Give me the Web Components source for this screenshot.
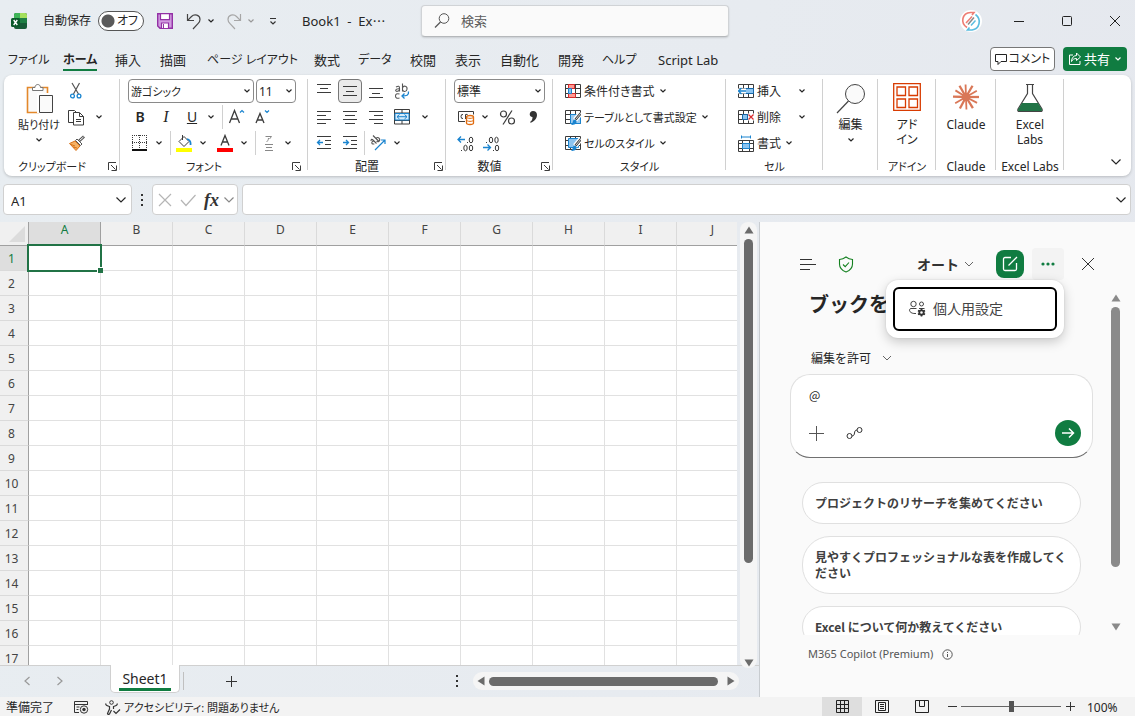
<!DOCTYPE html>
<html lang="ja">
<head>
<meta charset="utf-8">
<title>Book1 - Excel</title>
<style>
html,body{margin:0;height:100%}
body{font-family:"Noto Sans","Noto Sans CJK JP",sans-serif;font-size:12px;line-height:16px;color:#262626;overflow:hidden}
</style>
</head>
<body>
<excel-app></excel-app>
<script>
const BASE = `
*{box-sizing:border-box}
:host{display:block}
:host,button,input,select,textarea{font-feature-settings:"palt"}
button,select,input,textarea{font:inherit;font-feature-settings:"palt";color:inherit;margin:0;padding:0;border:0;background:none;outline:0}
button{display:inline-flex;align-items:center;justify-content:center;white-space:nowrap}
a{color:inherit;text-decoration:none}
`;
const define = (name, css, html, init) => customElements.define(name, class extends HTMLElement {
  constructor() {
    super();
    this.attachShadow({mode: 'open'}).innerHTML = `<style>${BASE}${css}</style>${html}`;
  }
  connectedCallback() { if (init) init(this, this.shadowRoot); }
});

const K = '#3b3b3b', B = '#1a84cf', G = '#107c41';
const lines = (list, c = K) => list.map(([x1, y, x2]) => `<path d="M${x1} ${y}.5H${x2}" stroke="${c}"/>`).join('');
const table = `<path d="M.5 1.5h15v13H.5zM.5 5.5h15M.5 10.5h15M5.5 1.5v13M10.5 1.5v13" fill="#fff" stroke="${K}"/>`;
const brushOver = `<path d="M16 4l-6 7" stroke="#fff" stroke-width="5"/><path d="M16 4l-5.500 6.500" stroke="${K}" stroke-width="2.500"/><path d="M16 4l-5 6" stroke="#fff" stroke-width=".8"/><path d="M6 16c3 0 6-1 5.500-4-.5-1.800-3-1.800-3.500 0-.4 1.800-.8 3-2 4z" fill="${B}"/>`;
const ICONS = {
  excel: [16,16,`<rect x="3" y="0" width="13" height="16" rx="2" fill="#185c37"/><path d="M3 5V2a2 2 0 012-2h5v6H3z" fill="#3fb558"/><path d="M9 0h5a2 2 0 012 2v4H9z" fill="#a5e05c"/><path d="M3 5h13v5H3z" fill="#1f8044"/><rect x="0" y="5" width="9" height="9" rx="1.500" fill="#0b5a2b"/><path d="M2.700 7l3.600 5M6.300 7l-3.600 5" stroke="#fff" stroke-width="1.400"/>`],
  save: [16,16,`<path d="M.7.700h14.600v14.600H3L.7 13z" fill="#d19be0" stroke="#9331a5" stroke-width="1.400"/><path d="M3.500.700h9v6h-9zM4.500 15v-5h7v5" fill="#fff" stroke="#9331a5" stroke-width="1.200"/><path d="M6.500 11v4" stroke="#9331a5"/>`],
  undo: [16,17,`<path d="M1.500 1v6.500H8M1.700 7.300L5.500 3.500c3-3 8.500-1.500 8.500 3 0 2-1 3.200-2 4.200L7 16" stroke="#444" stroke-width="1.200"/>`],
  redo: [16,17,`<path d="M14.500 1v6.500H8M14.300 7.300L10.500 3.500c-3-3-8.500-1.500-8.500 3 0 2 1 3.200 2 4.200L9 16" stroke="#a6a6a6" stroke-width="1.200"/>`],
  chev: [8,6,`<path d="M1.500 1.500L4 4l2.500-2.500" stroke="currentColor" stroke-width="1.200"/>`],
  chevT: [10,6,`<path d="M1 1l4 4 4-4" stroke="#555" stroke-width=".9"/>`],
  chevL: [12,8,`<path d="M1.500 1.500L6 6l4.500-4.500" stroke="currentColor" stroke-width="1.200"/>`],
  qat: [8,8,`<path d="M1 1.500h6M1.500 4.500L4 7l2.500-2.500" stroke="#333" stroke-width="1.200"/>`],
  search: [18,18,`<circle cx="11" cy="6.500" r="4.800" stroke="#555"/><path d="M7.500 10L2 15.500" stroke="#555" stroke-width="1.200"/>`],
  avatar: [22,22,`<circle cx="11" cy="11" r="11" fill="#fff"/><path d="M7 17.500C0 13 2 3 10.500 2.500h3.500L12 5" stroke="#ee7d74" stroke-width="1.600"/><path d="M15.500 4.500c6.500 5 4 14.500-3.500 15.500H7.500l2-2.500" stroke="#59bde0" stroke-width="1.600"/><path d="M6 13l6-6.500" stroke="#ee7d74" stroke-width="1.500"/><path d="M8 14.500l6-7" stroke="#888" stroke-width="1.500"/><path d="M11 15.500l4.500-5" stroke="#59bde0" stroke-width="1.500"/>`],
  min: [12,12,`<path d="M1 6.500h10" stroke="#222"/>`],
  max: [12,12,`<rect x="1.500" y="1.500" width="9" height="9" rx="1" stroke="#222"/>`],
  close: [12,12,`<path d="M1 1l10 10M11 1L1 11" stroke="#222"/>`],
  comment: [12,12,`<path d="M.5 1.500h11v7H6L3 11.500v-3H.5z" stroke="#222"/>`],
  share: [14,14,`<path d="M5 3H1.500v9.500H12V9M8.500 1l4 4-4 3.500V6.500C6 6.500 4.500 7.500 3.500 9.500c0-3.500 2-5.800 5-6z" stroke="#fff"/>`],
  paste: [30,32,`<path d="M3.500 4.500h20V11H14v18.500H3.500z" fill="#fafafa" stroke="#e3882b" stroke-width="1.600"/><path d="M8.500 7.500V4.500h2.500c0-4 5.500-4 5.500 0H19v3z" fill="#fff" stroke="#777"/><path d="M13 10h17v20H13z" fill="#fff"/><path d="M15.500 12.500h13v17h-13z" fill="#fafafa" stroke="#444"/>`],
  cut: [16,18,`<path d="M4 1l6.500 11M11.500 1L5.500 12" stroke="#555" stroke-width="1.200"/><circle cx="4.500" cy="14" r="1.900" stroke="${B}" stroke-width="1.300"/><circle cx="11" cy="14" r="1.900" stroke="${B}" stroke-width="1.300"/>`],
  copy: [18,17,`<path d="M6 13.500H1.500V1.500h6l2 2" stroke="${K}"/><path d="M6.500 3.500h6l4 4v8.500h-10z" fill="#fff" stroke="${K}"/><path d="M12.500 4v3.500h4M9 10.500h5M9 12.500h5" stroke="${K}"/>`],
  brush: [17,17,`<path d="M16 1.500l-5.500 5" stroke="#555" stroke-width="3"/><path d="M15.500 2l-4 3.500" stroke="#fff"/><path d="M1.500 8.500L8 15.500l4-4.500-5-5z" fill="#f5b266" stroke="#d9731a"/><path d="M7.500 5.500l5 5 1.500-1.500-5-5z" fill="#fff" stroke="#555"/><path d="M3 9.500l4 1.500M5 12l4 1" stroke="#d9731a"/>`],
  launch: [9,9,`<path d="M.5 8V.5H8M3 3l4.500 4.500M8.500 3.500v5h-5" stroke="${K}"/>`],
  bigA: [18,18,`<path d="M1.500 15L6.500 2.500 11.500 15M3.300 11h6.500" stroke="${K}" stroke-width="1.300"/><path d="M12 4.500L14 2.500l2 2" stroke="${B}" stroke-width="1.200"/>`],
  smallA: [18,18,`<path d="M2 15L6 5.500 10 15M3.500 12h5" stroke="${K}" stroke-width="1.300"/><path d="M11 2.500l2 2 2-2" stroke="${B}" stroke-width="1.200"/>`],
  borders: [16,16,`<path d="M0 .5h15M0 7.500h15M.5 0v14M7.500 0v14M14.500 0v14" stroke="${K}" stroke-dasharray="1 1"/><path d="M0 15h15" stroke="#111" stroke-width="2"/>`],
  fill: [16,18,`<path d="M3 7.500L8 2.500l5 5-5 5z" fill="#fff" stroke="${K}"/><path d="M6.500 1v5" stroke="${K}"/><path d="M11 5c2 .5 4 2 3.500 6" stroke="${B}" stroke-width="1.800"/><path d="M0 14h16v4H0z" fill="#ff0"/>`],
  fontcolor: [16,18,`<path d="M4 11.500L8 1.500l4 10M5.500 8h5" stroke="${K}" stroke-width="1.300"/><path d="M0 14h16v4H0z" fill="red"/>`],
  ruby: [10,17,`<path d="M1.500 1.500h6L5.500 4M4.500 3c0 2-1 3-2 4" stroke="#888"/><path d="M1 9.500h8M2 12.500h6M1 15.500h8" stroke="#888"/>`],
  top: [16,16,lines([[1,1,15],[4,5,12],[1,9,15]])],
  mid: [16,16,lines([[1,3,15],[4,8,12],[1,12,15]])],
  bot: [16,16,lines([[1,5,15],[4,10,12],[1,14,15]])],
  left: [16,16,lines([[1,2,15],[1,6,10],[1,10,15],[1,14,10]])],
  center: [16,16,lines([[1,2,15],[3,6,13],[1,10,15],[3,14,13]])],
  right: [16,16,lines([[1,2,15],[6,6,15],[1,10,15],[6,14,15]])],
  outdent: [16,16,lines([[1,1,15],[9,5,15],[9,9,15],[1,13,15]])+`<path d="M1.500 7.500H7M4 5L1.500 7.500 4 10" stroke="${B}" stroke-width="1.300"/>`],
  indent: [16,16,lines([[1,1,15],[9,5,15],[9,9,15],[1,13,15]])+`<path d="M1 7.500h5.500M4 5l2.500 2.500L4 10" stroke="${B}" stroke-width="1.300"/>`],
  wrap: [16,17,`<path d="M2 4q3.500-2 3.500 1v3.500M5.500 5.800c-5-.3-4.500 3 -2 2.500 1.500-.3 2-1 2-2M8.500.5v8M8.500 5c1-3 5-2 4.500 1.200-.4 3-4 3-4.500.5M5.500 11q-4-1-4 2t4 2" stroke="#555" stroke-width="1.100"/><path d="M14.500 8.500c.5 4-2 4.500-6.500 4.500M10.500 10.500L8 13l2.500 2.500" stroke="${B}" stroke-width="1.300"/>`],
  merge: [16,16,`<path d="M.5 .5h15v14.500H.5zM.5 4h15M.5 11.500h15M8 .5V4M8 11.500V15" stroke="${K}"/><path d="M1 4.500h14v6.500H1z" fill="#d6ebfa" stroke="${B}"/><path d="M3 7.700h10M5.500 5.500L3 7.700 5.500 10M10.500 5.500L13 7.700 10.500 10" stroke="${B}"/>`],
  orient: [18,18,`<path d="M2 7q0-3 2.500-.5L7.500 9.500M4.500 7c-3 1-1.500 4 .8 2.700M4 1.500l6 6M7 4.500c2-2.500 5 .5 3 2.800-1 .8-2 .4-2.500-.3" stroke="#555" stroke-width="1.100"/><path d="M6 16L16 6M12 6h4v4" stroke="${B}" stroke-width="1.200"/>`],
  currency: [18,17,`<path d="M8 12.500H1.500v-10h15v3" stroke="${K}"/><path d="M6 5.500q-2-.5-2 2t2 2M8.500 10V5.500q2-.8 2.500 1" stroke="${K}"/><path d="M9.500 8c0-2 7-2 7 0v6c0 2-7 2-7 0z" fill="#fff" stroke="#e06c10" stroke-width="1.300"/><path d="M9.500 8c0 1.800 7 1.800 7 0M9.500 11c0 1.800 7 1.800 7 0" stroke="#e06c10"/>`],
  percent: [17,17,`<circle cx="4.500" cy="5" r="3" stroke="${K}" stroke-width="1.200"/><circle cx="12.500" cy="12" r="3" stroke="${K}" stroke-width="1.200"/><path d="M13 1.500L4 15.500" stroke="${K}" stroke-width="1.200"/>`],
  comma: [10,16,`<path d="M5 2C1 2 .5 8 4.500 8c0 3-1 4-2.500 5l.7.700C6 12.500 9 9.500 9 6c0-2.500-1.500-4-4-4z" fill="#333"/>`],
  decinc: [18,17,`<path d="M1 4.500h7M4 1.500l-3 3 3 3" stroke="${B}" stroke-width="1.300"/><path d="M10.500 7v1M4.500 15v1" stroke="${K}"/><ellipse cx="14" cy="5" rx="1.800" ry="2.800" stroke="${K}"/><ellipse cx="8.500" cy="13" rx="1.700" ry="2.800" stroke="${K}"/><ellipse cx="14" cy="13" rx="1.700" ry="2.800" stroke="${K}"/>`],
  decdec: [18,17,`<path d="M0 12.500h7M4.500 9.500l3 3-3 3" stroke="${B}" stroke-width="1.300"/><path d="M3.500 7v1M10.500 15v1" stroke="${K}"/><ellipse cx="8" cy="5" rx="1.700" ry="2.800" stroke="${K}"/><ellipse cx="13.500" cy="5" rx="1.700" ry="2.800" stroke="${K}"/><ellipse cx="14" cy="13" rx="1.700" ry="2.800" stroke="${K}"/>`],
  cond: [16,16,table+`<path d="M3.500 1.500h6v4h-6zM3.500 10.500h7v4h-7z" fill="#ff9a94" stroke="#d92b2b"/><path d="M3.500 5.500h3v5h-3z" fill="#8cc4f0" stroke="${B}"/>`],
  tstyle: [16,16,table+`<path d="M5.500 5.500h10v9h-10z" fill="#9ccbf0" stroke="${B}"/>`+brushOver],
  cstyle: [16,16,table+`<path d="M3.500 3.500h10v9h-10z" fill="#8cc4f0" stroke="${B}"/>`+brushOver],
  cinsert: [16,16,table+`<path d="M6.500 5.500h9v5h-9z" fill="#8cc4f0" stroke="#1667a8"/><path d="M0 8h8" stroke="#fff" stroke-width="5"/><path d="M.5 8H8M3.500 5L.5 8l3 3" stroke="${B}" stroke-width="1.300"/>`],
  cdelete: [16,16,table+`<path d="M4.500 5.500h5v5h-5z" fill="#8cc4f0" stroke="#1667a8"/><path d="M10 4.500h6v7h-6z" fill="#fff"/><path d="M10.500 5.500l5 5M15.500 5.500l-5 5" stroke="#d92b2b" stroke-width="1.200"/>`],
  cformat: [16,17,`<path d="M3.500 2h9M3.500 .5v3M12.500.5v3" stroke="${B}"/><path d="M.5 5.500h15v11H.5zM.5 8.500h15M.5 13.500h15M4.500 5.500v11M11.500 5.500v11" stroke="${K}"/><path d="M4.500 8.500h7v5h-7z" fill="#8cc4f0" stroke="${B}"/>`],
  find: [30,32,`<circle cx="19" cy="11" r="9.500" fill="#fafafa" stroke="#444"/><path d="M12.500 18L1 30" stroke="#444" stroke-width="1.200"/>`],
  addin: [28,28,`<path d="M.7.700h26.600v26.600H.7zM4 4h8.500v8.500H4zM16 4h8.500v8.500H16zM4 16h8.500v8.500H4zM16 16h8.500v8.500H16z" stroke="#d83b01" stroke-width="1.300"/>`],
  claude: [28,28,[0,28,58,88,118,150,182,212,240,268,300,330].map((a,i)=>`<path d="M14 14L${14+(i%2?12.5:13)} 14" stroke="#d97757" stroke-width="${i%2?1.8:2.3}" transform="rotate(${a} 14 14)"/>`).join('')+`<circle cx="14" cy="14" r="4" fill="#d97757"/>`],
  labs: [28,30,`<path d="M10 1.500h8M11.500 1.500v9L2 26c-.7 1.700 0 2.500 1.500 2.500h21c1.500 0 2.200-.8 1.500-2.500l-9.500-15.500v-9" fill="#fff" stroke="#444" stroke-width="1.200"/><path d="M6 20h16l4 6.500c.3 1-.3 1.500-1.500 1.500h-21C2.300 28 1.700 27.500 2 26.500z" fill="#217346"/>`],
  x: [14,14,`<path d="M1 1l12 12M13 1L1 13" stroke="#b5b5b5" stroke-width="1.200"/>`],
  check: [16,14,`<path d="M1 7l5 5.500L15.500 2" stroke="#b5b5b5" stroke-width="1.200"/>`],
  dots: [4,12,`<path d="M1 0h2v2H1zM1 5h2v2H1zM1 10h2v2H1z" fill="#333"/>`],
  lt: [8,10,`<path d="M6.500 1L2 5l4.500 4" stroke="#999" stroke-width="1.200"/>`],
  gt: [8,10,`<path d="M1.500 1L6 5 1.500 9" stroke="#999" stroke-width="1.200"/>`],
  plus: [11,11,`<path d="M5.500 0v11M0 5.500h11" stroke="#333"/>`],
  zin: [9,9,`<path d="M4.500 0v9M0 4.500h9" stroke="#333"/>`],
  zout: [9,9,`<path d="M0 4.500h9" stroke="#333"/>`],
  plusL: [15,15,`<path d="M7.500 0v15M0 7.500h15" stroke="#555"/>`],
  up: [10,8,`<path d="M5 .5L9.500 7.500H.5z" fill="currentColor"/>`],
  down: [10,8,`<path d="M5 7.500L9.500.500H.5z" fill="currentColor"/>`],
  tleft: [8,10,`<path d="M.5 5L7.500.500v9z" fill="currentColor"/>`],
  tright: [8,10,`<path d="M7.500 5L.5.500v9z" fill="currentColor"/>`],
  menu: [16,11,`<path d="M0 .5h12M0 5.500h16M0 10.500h10" stroke="#333"/>`],
  shield: [16,17,`<path d="M8 1c2 1.500 4 2.300 6.500 2.500V8c0 4-2.500 6.500-6.500 8-4-1.500-6.500-4-6.500-8V3.500C4 3.300 6 2.500 8 1zM5 8.500l2.200 2.200L11 6.500" stroke="#13801f" stroke-width="1.100"/>`],
  compose: [16,16,`<path d="M9 1.500H3A1.500 1.500 0 001.500 3v10A1.500 1.500 0 003 14.500h10a1.500 1.500 0 001.500-1.500V7M6.500 9.500L15 1" stroke="#fff" stroke-width="1.300"/>`],
  more: [14,4,`<circle cx="2" cy="2" r="1.600" fill="${G}"/><circle cx="7" cy="2" r="1.600" fill="${G}"/><circle cx="12" cy="2" r="1.600" fill="${G}"/>`],
  closeL: [14,14,`<path d="M1 1l12 12M13 1L1 13" stroke="#333"/>`],
  people: [18,17,`<circle cx="5.500" cy="4" r="2.700" stroke="#444"/><circle cx="13.500" cy="4" r="2" stroke="#444"/><path d="M8.500 8.500H3C.5 8.500.5 14 8 13.500M11 8.500h5.500" stroke="#444"/><circle cx="13.500" cy="12.500" r="2.200" stroke="#333" stroke-width="1.800"/><path d="M13.500 8.500v2M13.500 14.500v2M10 10.500l1.800 1M15.200 13.500l1.800 1M17 10.500l-1.800 1M11.800 13.500l-1.800 1" stroke="#333" stroke-width="1.600"/>`],
  flow: [17,14,`<circle cx="3.500" cy="10" r="2.500" stroke="#333"/><circle cx="13.500" cy="4" r="2.500" stroke="#333"/><path d="M6 10c4 0 1-6 5-6" stroke="#333"/>`],
  send: [14,12,`<path d="M1 6h11.500M8 1.500L12.500 6 8 10.500" stroke="#fff" stroke-width="1.500"/>`],
  info: [11,11,`<circle cx="5.500" cy="5.500" r="4.700" stroke="#555"/><path d="M5.500 5v3M5.500 3v1" stroke="#555"/>`],
  macro: [16,14,`<path d="M6 12.500H1.500v-11h13V5M1.500 4.500h13M3.500 7h3M3.500 9.500h2" stroke="#333"/><circle cx="11" cy="9.500" r="3.700" fill="#f3f3f3" stroke="#333"/><circle cx="11" cy="9.500" r="1.700" fill="#333"/>`],
  a11y: [16,15,`<circle cx="6.500" cy="2.500" r="1.800" stroke="#333"/><path d="M1 3.500C0 5.500 3 6 4.500 6.500V9L2.500 13.500c.5 1.500 2 1 2.500-.5l1.500-3M12 3.500c1 2-2 2.500-3.500 3V9M8.500 11l2.500 2.500L15 9.500" stroke="#333" stroke-width="1.200"/>`],
  vnormal: [13,13,`<path d="M.5.500h12v12H.5zM.5 4.500h12M.5 8.500h12M4.500 .5v12M8.500.5v12" stroke="#222"/>`],
  vlayout: [14,13,`<path d="M.5.500h13v12H.5zM3.500 2.500h7v8h-7zM5 4.500h4M5 6.500h4M5 8.500h4" stroke="#222"/>`],
  vbreak: [14,13,`<path d="M.5.500h13v12H.5zM4.500.5v6h5M9.500.5v6" stroke="#222"/>`]
};
customElements.define('ui-icon', class extends HTMLElement {
  constructor() { super(); this.attachShadow({mode: 'open'}); }
  connectedCallback() {
    const [w, h, body] = ICONS[this.getAttribute('name')];
    this.shadowRoot.innerHTML = `<style>:host{display:inline-flex;flex:none}svg{display:block}</style><svg width="${w}" height="${h}" viewBox="0 0 ${w} ${h}" fill="none" aria-hidden="true">${body}</svg>`;
  }
});
const ic = n => `<ui-icon name="${n}"></ui-icon>`;

define('title-bar', `
:host{display:flex;align-items:center;height:42px}
.left{flex:0 0 421px;display:flex;align-items:center;padding-left:11px}
label.auto{display:flex;align-items:center;gap:7px;margin-left:16px}
.switch{appearance:none;display:block;grid-area:1/1;width:46px;height:20px;border:1px solid #555;border-radius:10px;background:radial-gradient(circle at 9px 9px,#5a5a5a 6px,transparent 7px),#fff}
.sw{display:grid;align-items:center}.sw span{grid-area:1/1;justify-self:end;padding-right:6px}
.gap{margin-left:5px}.save{margin-left:13px}.undo{margin-left:13px}.redo{margin-left:11px}.qat{margin-left:14px}
.doc{margin-left:25px;white-space:pre;font-size:13px}
.doc i{font-family:"Noto Sans CJK JP",sans-serif;font-style:normal}
.search{flex:0 1 308px;min-width:100px;height:32px;display:flex;align-items:center;gap:10px;padding-left:11px;background:#fafafa;border:1px solid #d0d3d6;border-bottom-color:#b5b8bb;border-radius:4px;box-shadow:0 1px 2px #0002}
.search input{flex:1;min-width:0;font-size:13px}.search input::placeholder{color:#5c5c5c;opacity:1}
.win{margin-left:auto;display:flex;align-items:center;gap:8px}
.win button{width:40px;height:32px}.win .me{margin-right:8px;width:24px}
`, `
<div class="left">${ic('excel')}<label class="auto">自動保存<span class="sw"><input class="switch" type="checkbox"><span>オフ</span></span></label>
<button class="save" aria-label="上書き保存">${ic('save')}</button>
<button class="undo" aria-label="元に戻す">${ic('undo')}</button><button class="gap">${ic('chev')}</button>
<button class="redo" aria-label="やり直し">${ic('redo')}</button><button class="gap" style="color:#999">${ic('chev')}</button>
<button class="qat">${ic('qat')}</button><span class="doc">Book1  -  Ex<i>…</i></span></div>
<label class="search">${ic('search')}<input type="text" placeholder="検索" aria-label="検索"></label>
<div class="win"><button class="me" aria-label="アカウント">${ic('avatar')}</button><button aria-label="最小化">${ic('min')}</button><button aria-label="最大化">${ic('max')}</button><button aria-label="閉じる">${ic('close')}</button></div>`);

define('ribbon-tabs', `
:host{display:flex;height:33px;align-items:center}
nav{flex:1;display:grid;grid-template-columns:55px 52px 45px 47px 107px 44px 52px 45px 45px 58px 44px 56px auto;justify-content:start;padding-left:8px;font-size:13px}
a{justify-self:start;white-space:nowrap;line-height:18px;border-bottom:2px solid transparent;margin-top:5px}
a.on{font-weight:700;border-color:#107c41}
.k{font-size:12px}
.acts{display:flex;gap:8px;padding:0 8px 0 0}
.acts button{height:24px;border-radius:4px;gap:2px}
.c{width:65px;border:1px solid #777;background:#fff}.s{width:64px;background:#107c41;color:#fff;font-size:13px}.s ui-icon+ui-icon{margin-left:2px}
`, `<nav><a href="#" class="k">ファイル</a><a href="#" class="k on">ホーム</a><a href="#">挿入</a><a href="#">描画</a><a href="#" class="k">ページ レイアウト</a><a href="#">数式</a><a href="#" class="k">データ</a><a href="#">校閲</a><a href="#">表示</a><a href="#">自動化</a><a href="#">開発</a><a href="#" class="k">ヘルプ</a><a href="#">Script Lab</a></nav>
<div class="acts"><button class="c">${ic('comment')}コメント</button><button class="s">${ic('share')}共有${ic('chev')}</button></div>`);

define('ribbon-group', `
:host{display:grid;grid-template-rows:78px 20px;position:relative;padding-top:3px;flex:none}
:host::after{content:"";position:absolute;right:0;top:4px;bottom:6px;width:1px;background:#d0d0d0}
.body{display:flex;min-width:0}
.foot{display:grid;grid-template-columns:1fr;align-items:center;justify-items:center}
.foot span,.foot button{grid-area:1/1;white-space:nowrap}
.foot span{padding-top:2px}
.foot button{justify-self:end;margin-right:var(--launch,3px)}
:host([compact]) .foot span{font-size:11px}
:host([launcher]) .foot span{padding-right:20px}
:host(:not([launcher])) .foot button{display:none}
`, `<div class="body"><slot></slot></div><div class="foot"><span></span><button aria-label="詳細">${ic('launch')}</button></div>`,
(host, root) => root.querySelector('span').textContent = host.getAttribute('label') || '');

const t = (n, l = '') => `<button class="t" aria-label="${l}">${ic(n)}</button>`;
const c = `<button class="ch" aria-label="その他">${ic('chev')}</button>`;
define('ribbon-bar', `
:host{display:flex;margin:0 4px;height:101px;background:#fff;border-radius:8px;box-shadow:0 1px 3px #0003;padding-right:8px}
.rows{display:grid;grid-template-rows:repeat(3,26px);flex:1}
.r{display:flex;align-items:center}
.t{width:26px;height:26px}.ch{width:12px;height:24px}
.t.on{width:24px;height:24px;margin:0 1px;border:1px solid #777;border-radius:4px;background:#ebebeb}
.sep{width:1px;height:24px;background:#d0d0d0;margin:0 1px 0 5px}
.sep.n{margin:0 0 0 5px}
.b{font-weight:600;font-size:14px}.i{font-family:"Liberation Serif",serif;font-style:italic;font-size:16px}.u{text-decoration:underline;font-size:14px}
.combo{position:relative;height:24px;display:block}
.combo select{appearance:none;width:100%;height:24px;border:1px solid #8a8a8a;border-radius:4px;background:#fff;padding:1px 0 0 2px}
.combo ui-icon{position:absolute;right:3px;top:9px;pointer-events:none}
.big{flex-direction:column;justify-content:flex-start;padding-top:5px;white-space:normal;line-height:16px}
.big ui-icon:first-child{height:32px}
.big ui-icon+span{margin-top:2px}
.big ui-icon:last-child{margin-top:4px}
.big.l ui-icon:first-child{height:28px}.big.l span{line-height:15px;margin-top:6px}
.cmd{gap:3px}
.cmd span{padding-top:1px}
.cmd ui-icon+span+ui-icon{margin-left:1px}
.k{font-size:11px}
.wide{width:56px;justify-content:flex-start}
.end{margin-left:auto;align-self:flex-end;padding:10px 0;width:14px}
`, `
<ribbon-group style="width:116px" label="クリップボード" launcher compact>
 <button class="big k" style="width:59px;padding-left:11px">${ic('paste')}<span>貼り付け</span>${ic('chev')}</button>
 <div class="rows"><div class="r">${t('cut','切り取り')}</div><div class="r">${t('copy','コピー')}<span style="width:4px"></span>${c}</div><div class="r">${t('brush','書式のコピー')}</div></div>
</ribbon-group>
<ribbon-group style="width:188px;--launch:7px" label="フォント" launcher compact>
 <div class="rows" style="padding-left:7px">
 <div class="r" style="gap:2px;padding-left:1px"><label class="combo k" style="width:126px"><select aria-label="フォント"><option>游ゴシック</option></select>${ic('chev')}</label><label class="combo" style="width:40px"><select aria-label="サイズ"><option>11</option></select>${ic('chev')}</label></div>
 <div class="r"><button class="t b">B</button><button class="t i">I</button><button class="t u">U</button>${c}<span class="sep"></span>${t('bigA','拡大')}${t('smallA','縮小')}</div>
 <div class="r">${t('borders','罫線')}${c}<span class="sep n"></span>${t('fill','塗りつぶし')}${c}<span style="width:3px"></span>${t('fontcolor','文字色')}${c}<span class="sep n"></span>${t('ruby','ふりがな')}${c}</div></div>
</ribbon-group>
<ribbon-group style="width:138px" label="配置" launcher>
 <div class="rows" style="padding-left:3px">
 <div class="r">${t('top')}<button class="t on" aria-label="上下中央">${ic('mid')}</button>${t('bot')}${t('wrap','折り返し')}</div>
 <div class="r">${t('left')}${t('center')}${t('right')}${t('merge','結合')}<span style="width:4px"></span>${c}</div>
 <div class="r">${t('outdent')}${t('indent')}<span class="sep n" style="margin-left:1px"></span>${t('orient','方向')}${c}</div></div>
</ribbon-group>
<ribbon-group style="width:107px" label="数値" launcher>
 <div class="rows" style="padding-left:7px">
 <div class="r" style="padding-left:1px"><label class="combo" style="width:91px"><select aria-label="表示形式"><option>標準</option></select>${ic('chev')}</label></div>
 <div class="r">${t('currency','通貨')}${c}<span style="width:3px"></span>${t('percent','パーセント')}${t('comma','桁区切り')}</div>
 <div class="r">${t('decinc')}${t('decdec')}</div></div>
</ribbon-group>
<ribbon-group style="width:173px" label="スタイル" compact>
 <div class="rows" style="padding-left:12px">
 <div class="r"><button class="cmd">${ic('cond')}<span>条件付き書式</span>${ic('chev')}</button></div>
 <div class="r"><button class="cmd k">${ic('tstyle')}<span>テーブルとして書式設定</span>${ic('chev')}</button></div>
 <div class="r"><button class="cmd k">${ic('cstyle')}<span>セルのスタイル</span>${ic('chev')}</button></div></div>
</ribbon-group>
<ribbon-group style="width:97px" label="セル" compact>
 <div class="rows" style="padding-left:12px">
 <div class="r"><button class="cmd wide">${ic('cinsert')}<span>挿入</span></button><span style="width:2px"></span>${c}</div>
 <div class="r"><button class="cmd wide">${ic('cdelete')}<span>削除</span></button><span style="width:2px"></span>${c}</div>
 <div class="r"><button class="cmd">${ic('cformat')}<span>書式</span>${ic('chev')}</button></div></div>
</ribbon-group>
<ribbon-group style="width:55px"><button class="big" style="flex:1">${ic('find')}<span>編集</span>${ic('chev')}</button></ribbon-group>
<ribbon-group style="width:58px" label="アドイン" compact><button class="big l" style="flex:1">${ic('addin')}<span>アド<br>イン</span></button></ribbon-group>
<ribbon-group style="width:60px" label="Claude"><button class="big l" style="flex:1">${ic('claude')}<span>Claude</span></button></ribbon-group>
<ribbon-group style="width:68px" label="Excel Labs"><button class="big l" style="flex:1">${ic('labs')}<span>Excel<br>Labs</span></button></ribbon-group>
<button class="end" aria-label="リボンを折りたたむ">${ic('chevL')}</button>`);

define('formula-bar', `
:host{display:flex;height:31px;margin:8px 4px 7px 3px}
.box{display:flex;align-items:center;background:#fff;border:1px solid #d0d0d0;border-radius:4px}
.name{width:129px;padding:0 4px 0 7px}.name input{flex:1;min-width:0;font-size:13px;padding-top:2px}
.dots{width:20px}
.fx{width:86px;gap:8px;padding-left:5px;margin-right:4px}.fx span{font:italic 600 18px/20px "Liberation Serif",serif;color:#333}
.fx button:last-child{color:#888;margin-left:-4px}
.in{flex:1;padding:0 3px 0 8px}.in input{flex:1;min-width:0}
`, `<div class="box name"><input value="A1" aria-label="名前ボックス"><button>${ic('chevL')}</button></div><button class="dots">${ic('dots')}</button>
<div class="box fx"><button>${ic('x')}</button><button>${ic('check')}</button><button><span>fx</span></button><button>${ic('chevL')}</button></div>
<div class="box in"><input aria-label="数式"><button>${ic('chevL')}</button></div>`);

define('sheet-grid', `
:host{overflow:hidden;background:#fff;min-width:0;min-height:0}
table{border-collapse:separate;border-spacing:0;table-layout:fixed;width:max-content}
th{font-weight:400;background:#f0f0f0;color:#444;padding:0}
thead th{width:72px;height:24px;line-height:16px;padding-bottom:7px;border-right:1px solid #dadada;border-bottom:1px solid #a0a0a0}
thead th:first-child{width:29px;padding:4px 3px 3px 9px;border-right-color:#a0a0a0}
thead th.sel{background:#dedede;color:#107c41;border-right-color:#a0a0a0}
.tri{display:block;height:16px;background:#dcdcdc;clip-path:polygon(100% 0,100% 100%,0 100%)}
tbody th{height:25px;font-size:12px;padding:2px 5px 0 0;border-right:1px solid #a0a0a0;border-bottom:1px solid #dadada}
tbody th.sel{background:#dedede;color:#107c41}
td{padding:0;border-right:1px solid #e1e1e1;border-bottom:1px solid #e1e1e1}
td.cur{position:relative;z-index:1}
td.cur::before{content:"";position:absolute;inset:-2px;border:2px solid #217346}
td.cur::after{content:"";position:absolute;right:-3px;bottom:-3px;width:5px;height:5px;background:#217346;box-shadow:-1px -1px #fff}
`, `<table><thead></thead><tbody></tbody></table>`, (h, r) => {
  const cols = [...'ABCDEFGHIJ'];
  r.querySelector('thead').innerHTML = `<tr><th><span class="tri"></span></th>${cols.map((x,i)=>`<th${i?'':' class="sel"'}>${x}</th>`).join('')}</tr>`;
  r.querySelector('tbody').innerHTML = Array.from({length:17},(_,i)=>`<tr><th${i?'':' class="sel"'}>${i+1}</th>${cols.map((_,j)=>`<td${i||j?'':' class="cur"'}></td>`).join('')}</tr>`).join('');
});

define('scroll-bar', `
:host{display:flex;flex-direction:column;align-items:center;color:#6b6b6b;padding:4px 0 1px}
:host([horizontal]){flex-direction:row;padding:0 4px}
.track{flex:1;display:flex;flex-direction:column;align-self:stretch;align-items:center;margin:5px 0}
.thumb{flex:0 0 var(--size);width:9px;border-radius:5px;background:currentColor}
:host([horizontal]) .track{flex-direction:row;margin:0 4px}
:host([horizontal]) .thumb{height:9px;width:auto}
.a{display:flex}
`, `<span class="a s"></span><div class="track"><div class="thumb"></div></div><span class="a e"></span>`, (h, r) => {
  const hz = h.hasAttribute('horizontal');
  r.querySelector('.s').innerHTML = ic(hz ? 'tleft' : 'up');
  r.querySelector('.e').innerHTML = ic(hz ? 'tright' : 'down');
});

define('sheet-tabs', `
:host{display:flex;height:32px;align-items:center;border-top:1px solid #d0d0d0;padding-bottom:1px}
.nav{display:flex;gap:25px;width:110px;padding-left:23px}
.tab{align-self:stretch;margin:-1px 0 3px;width:70px;border:1px solid #d0d0d0;border-top:0;border-radius:0 0 5px 5px;background:#fff;align-items:flex-start;font-size:14px;line-height:21px;padding-top:3px}
.tab span{border-bottom:3px solid #107c41;padding:0 3px;height:23px}
.sep{width:1px;height:18px;background:#c0c0c0;margin:0 42px 0 3px}
.dots{margin-left:auto;margin-right:14px}
scroll-bar{width:266px;height:18px;background:#f5f5f5;border-radius:9px;margin-right:20px}
`, `<div class="nav">${ic('lt')}${ic('gt')}</div><button class="tab"><span>Sheet1</span></button><span class="sep"></span><button aria-label="新しいシート">${ic('plus')}</button><button class="dots">${ic('dots')}</button><scroll-bar horizontal style="--size:229px"></scroll-bar>`);

define('action-menu', `
:host{position:absolute;z-index:2;width:178px;padding:7px;background:#fff;border-radius:12px;box-shadow:0 4px 12px #0003,0 0 2px #0002}
button{width:100%;height:44px;justify-content:flex-start;gap:7px;padding:0 0 2px 13px;border:2px solid #000;border-radius:6px;font-size:14px;font-feature-settings:normal;color:#444}
`, `<button>${ic('people')}<slot></slot></button>`);
define('prompt-box', `
:host{height:84px;background:#fff;border:1px solid #e0e0e0;border-bottom-color:#707070;border-radius:20px;padding:12px 11px 0 18px}
textarea{display:block;width:100%;height:16px;resize:none;overflow:hidden;font-size:12px;line-height:16px}
.row{display:flex;align-items:center;margin-top:17px;gap:22px}
.send{width:26px;height:26px;border-radius:50%;background:#107c41;margin-left:auto}
`, `<textarea aria-label="メッセージ" rows="1">@</textarea><div class="row"><button aria-label="追加">${ic('plusL')}</button><button aria-label="ツール">${ic('flow')}</button><button class="send" aria-label="送信">${ic('send')}</button></div>`);
define('suggestion-chip', `
:host{flex:none}
button{width:100%;min-height:42px;padding:12px 12px;border:1px solid #e0e0e0;border-radius:28px;background:#fff;justify-content:flex-start;text-align:left;white-space:normal;font-weight:600;font-feature-settings:normal;color:#404040}
`, `<button><span><slot></slot></span></button>`);

define('copilot-pane', `
:host{display:flex;flex-direction:column;position:relative;background:#fafafa;border-left:1px solid #c8ccd0;font-family:"Noto Sans CJK JP",sans-serif;min-height:0}
header{display:flex;align-items:center;height:32px;margin-top:26px;padding:0 40px;flex:none}
.mode{margin-left:auto;font-size:14px;font-weight:700;color:#333;gap:5px;font-feature-settings:normal}
.shield{margin-left:22px;display:flex}
.new{width:28px;height:28px;border-radius:8px;background:#107c41;margin-left:22px}
.more{width:32px;height:32px;border-radius:4px;background:#f3f3f3;margin:0 17px 0 8px}
action-menu{top:58px;right:71px}
.mid{flex:1;display:flex;min-height:0;overflow:hidden}
.col{flex:1;min-width:0;padding-left:30px}
h1{font-size:20px;line-height:24px;margin:12px 0 0 19px;font-weight:700;height:50px;font-feature-settings:normal}
.perm{margin:8px 0 8px 21px;gap:11px;font-feature-settings:normal}
.chips{display:flex;flex-direction:column;gap:12px;margin:24px 12px 0 12px}
.mid scroll-bar{width:15px;margin:11px 12px 0 15px;color:#8a8a8a;padding:3px 0 4px}
footer{flex:0 0 62px;padding:11px 0 0 48px;display:flex;gap:9px;align-items:flex-start;color:#555;font-family:"Noto Sans",sans-serif;font-size:11px}
footer ui-icon{margin-top:3px}
`, `<header><button aria-label="メニュー">${ic('menu')}</button><span class="shield">${ic('shield')}</span><button class="mode">オート ${ic('chevT')}</button><button class="new" aria-label="新しいチャット">${ic('compose')}</button><button class="more" aria-label="その他">${ic('more')}</button><button aria-label="閉じる">${ic('closeL')}</button></header>
<action-menu>個人用設定</action-menu>
<div class="mid"><div class="col"><h1>ブックを</h1><button class="perm">編集を許可${ic('chevT')}</button><prompt-box></prompt-box>
<div class="chips"><suggestion-chip>プロジェクトのリサーチを集めてください</suggestion-chip><suggestion-chip>見やすくプロフェッショナルな表を作成してください</suggestion-chip><suggestion-chip>Excel について何か教えてください</suggestion-chip></div></div><scroll-bar style="--size:260px"></scroll-bar></div>
<footer>M365 Copilot (Premium)${ic('info')}</footer>`);

define('status-bar', `
:host{display:flex;align-items:center;height:19px;background:#f3f3f3;padding:0 15px 0 6px}
span,.a{padding-top:2px}
.m{margin:0 16px 0 19px}
.a{gap:3px;font-size:11px}
.v{width:40px;height:19px}.v.on{background:#dedede}
.views{margin-left:auto;display:flex;margin-right:4px}
.z{width:12px;height:16px}
input{appearance:none;width:100px;height:16px;margin:0 3px;background:linear-gradient(#666,#666) center/100% 1px no-repeat}
input::-webkit-slider-thumb{appearance:none;width:5px;height:11px;background:#555}
.pct{width:33px;margin-left:11px}
`, `<span>準備完了</span><button class="m">${ic('macro')}</button><button class="a">${ic('a11y')}アクセシビリティ: 問題ありません</button>
<div class="views"><button class="v on" aria-label="標準">${ic('vnormal')}</button><button class="v" aria-label="ページ レイアウト">${ic('vlayout')}</button><button class="v" aria-label="改ページ">${ic('vbreak')}</button></div>
<button class="z" aria-label="縮小">${ic('zout')}</button><input type="range" min="0" max="100" value="50" aria-label="ズーム"><button class="z" aria-label="拡大">${ic('zin')}</button><span class="pct">100%</span>`);

define('excel-app', `
:host{display:flex;flex-direction:column;height:100vh;background:linear-gradient(100deg,#e8edf1,#e7ebf0 60%,#e5e8ee)}
main{flex:1;display:grid;grid-template-columns:minmax(0,1fr) 376px;min-height:0}
.work{display:grid;grid-template:minmax(0,1fr) 32px/minmax(0,1fr) 22px;min-height:0}
.work scroll-bar{margin:0 2px -3px 3px;background:#f5f5f5;border-radius:8px;z-index:1}
sheet-tabs{grid-column:1/3}
`, `<title-bar></title-bar><ribbon-tabs></ribbon-tabs><ribbon-bar></ribbon-bar><formula-bar></formula-bar>
<main><div class="work"><sheet-grid></sheet-grid><scroll-bar style="--size:324px"></scroll-bar><sheet-tabs></sheet-tabs></div><copilot-pane></copilot-pane></main><status-bar></status-bar>`);
</script>
</body>
</html>
